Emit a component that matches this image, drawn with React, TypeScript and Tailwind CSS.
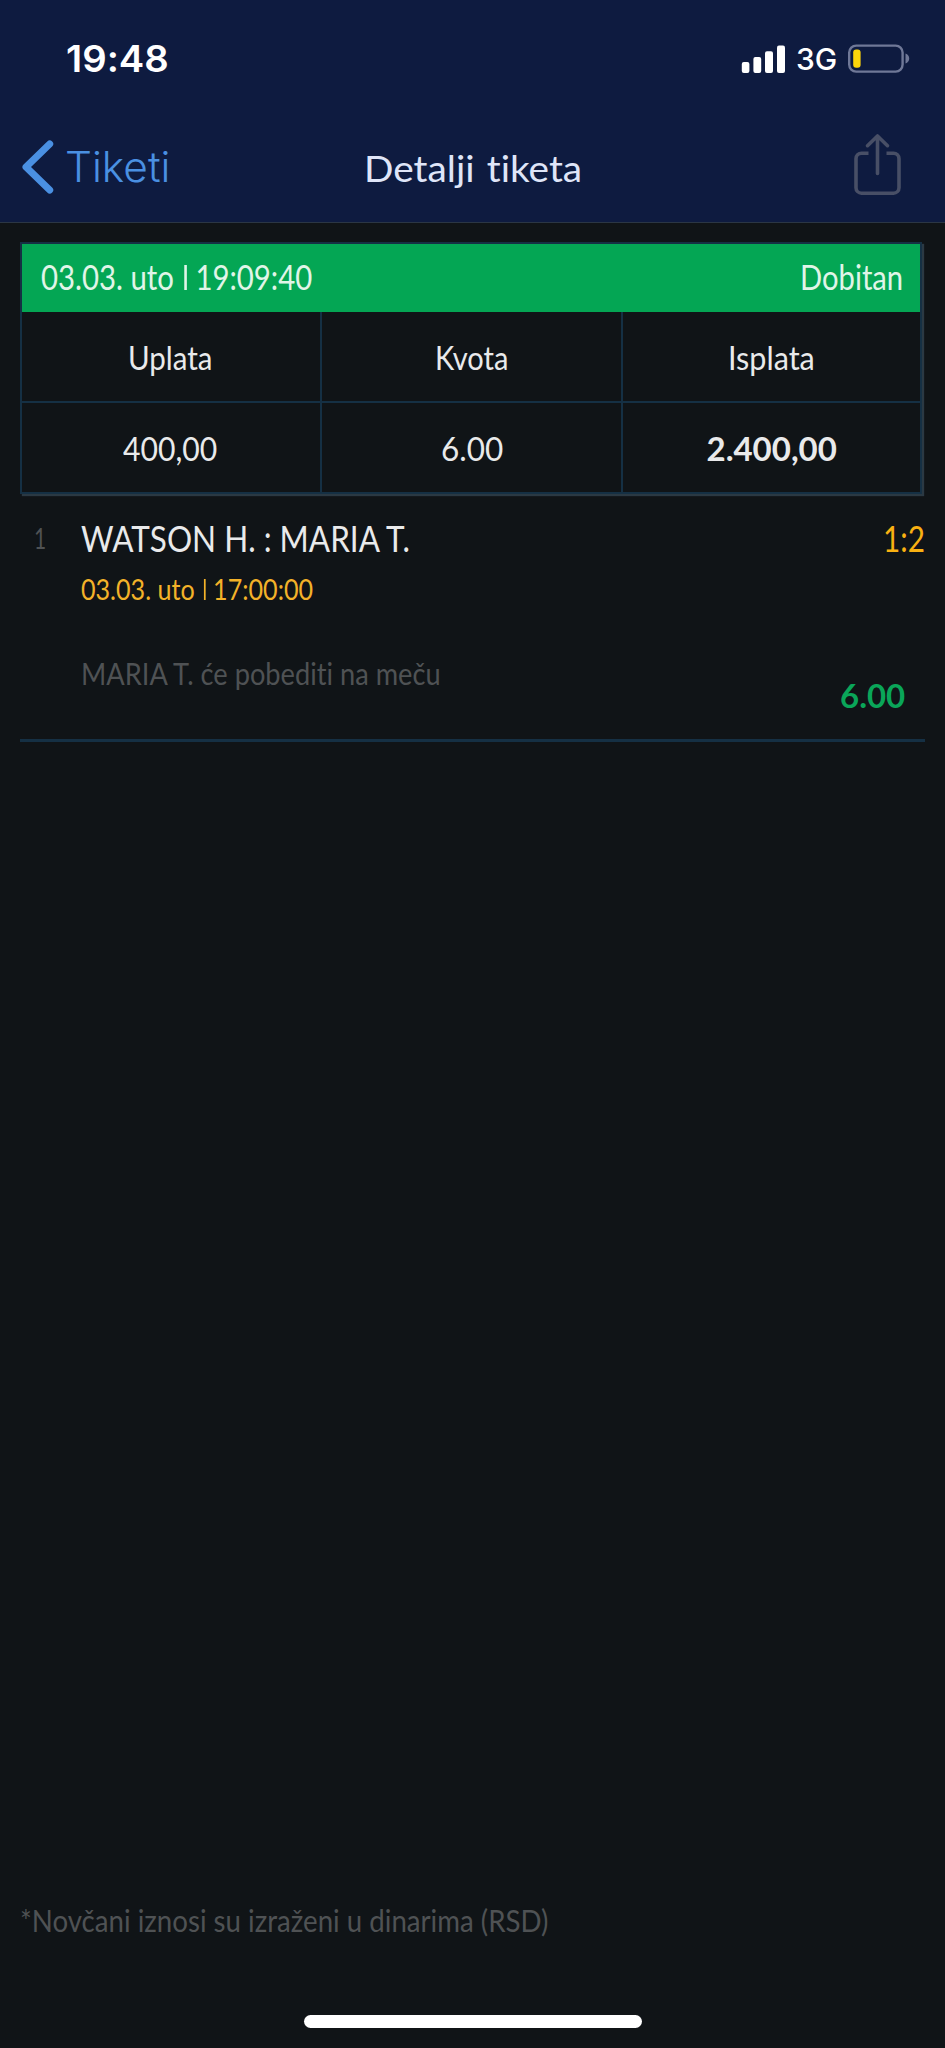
import { useLayoutEffect, useRef, useState } from "react";
import type { ReactNode } from "react";
import clsx from "clsx";

const SUMMARY = [
  { label: "Uplata", labelWidth: 84, value: "400,00", valueWidth: 94, strong: false },
  { label: "Kvota", labelWidth: 73, value: "6.00", valueWidth: 62, strong: false },
  { label: "Isplata", labelWidth: 87, value: "2.400,00", valueWidth: 130, strong: true },
];

export default function App() {
  return (
    <div className="flex h-[2048px] w-[945px] flex-col overflow-hidden bg-[#101417] font-['Lato',sans-serif] text-[#e9eaeb] [font-variant-ligatures:none]">
      <header className="h-[223px] shrink-0 border-b border-[#2b3644] bg-[#0e1b40]">
        <StatusBar />
        <NavBar />
      </header>

      <main className="flex flex-1 flex-col px-5 pt-[19px]">
        <TicketCard />
        <BetRow />
      </main>

      <footer className="h-[148px] shrink-0 pl-5">
        <Condensed width={528} className="h-10 text-[31px] leading-10 text-[#4f5254]">
          *Novčani iznosi su izraženi u dinarima (RSD)
        </Condensed>
        <div className="ml-[284px] mt-[75px] h-[13px] w-[338px] rounded-full bg-white" />
      </footer>
    </div>
  );
}

function StatusBar() {
  return (
    <div className="flex h-[117px] items-center justify-between pl-[66px] pr-[34px] font-['Inter',sans-serif] text-white">
      <Condensed width={103} className="h-12 text-[37.5px] font-semibold leading-[48px]">
        19:48
      </Condensed>
      <div className="flex items-center">
        <svg className="h-[28px] w-[44px]" viewBox="0 0 44 28" fill="currentColor">
          <rect x="0.8" y="17" width="7.6" height="11" rx="2" />
          <rect x="12.4" y="12" width="7.8" height="16" rx="2" />
          <rect x="24" y="6.2" width="8" height="21.8" rx="2" />
          <rect x="36" y="0.6" width="8" height="27.4" rx="2" />
        </svg>
        <Condensed width={41} className="ml-[11px] h-10 text-[30px] font-medium leading-10">
          3G
        </Condensed>
        <svg className="ml-[10px] h-[30px] w-[64px]" viewBox="0 0 64 30" fill="none">
          <rect x="2.2" y="1.6" width="53.4" height="26" rx="7" stroke="#6f7897" strokeWidth="2.4" />
          <rect x="6.2" y="5.6" width="7.4" height="18.2" rx="3" fill="#fdd60b" />
          <path d="M58.5 9.600c2.4.8 3.7 2.7 3.7 5s-1.3 4.200-3.700 5z" fill="#6f7897" />
        </svg>
      </div>
    </div>
  );
}

function NavBar() {
  return (
    <div className="grid h-[100px] grid-cols-[344px_1fr_52px] items-center pl-[20px] pr-[43px]">
      <div className="flex items-center text-[#4a90e2]">
        <svg className="h-[56px] w-[36px]" viewBox="0 0 36 56" fill="none">
          <path d="M29.7 5 6 28l23.7 23" stroke="currentColor" strokeWidth="7" strokeLinecap="round" strokeLinejoin="round" />
        </svg>
        <Condensed width={105} className="ml-[9px] h-12 font-['Inter',sans-serif] text-[42px] font-light leading-[48px]">
          Tiketi
        </Condensed>
      </div>
      <Condensed width={218} className="mt-[2px] h-12 text-[37px] leading-[48px] text-[#dfe5f8] [word-spacing:0.06em]">
        Detalji tiketa
      </Condensed>
      <svg className="mb-[4px] h-[64px] w-[52px]" viewBox="0 0 52 64" fill="none" stroke="#484f66" strokeWidth="3.6">
        <path d="M18.5 20.200h-7a5.500 5.500 0 0 0-5.500 5.500v29a5.500 5.500 0 0 0 5.500 5.500h32a5.500 5.500 0 0 0 5.500-5.500v-29a5.500 5.500 0 0 0-5.500-5.500h-7" />
        <path d="M27.500 40.500V3M17.500 12.700l10-9.700 10 9.700" strokeLinecap="round" strokeLinejoin="round" />
      </svg>
    </div>
  );
}

function TicketCard() {
  return (
    <section className="mb-[2px] mr-[3px] h-[252px] border-2 border-[#153044] shadow-[2px_2px_1px_#2b3943]">
      <div className="flex h-[68px] items-center justify-between bg-[#04a654] pb-[2px] pl-[19px] pr-[17px] text-[#e0f5e8]">
        <Condensed width={271} className="h-10 text-[34px] leading-10">
          03.03. uto
          <Pipe />
          19:09:40
        </Condensed>
        <Condensed width={103} className="h-10 text-[34px] leading-10">
          Dobitan
        </Condensed>
      </div>
      <div className="grid grid-cols-[300px_301px_1fr] divide-x-2 divide-[#153044]">
        {SUMMARY.map((cell, i) => (
          <div key={cell.label} className="divide-y-2 divide-[#153044]">
            <div className={clsx("flex h-[91px] items-center justify-center", i === 0 && "pr-[3px]")}>
              <Condensed width={cell.labelWidth} className="h-10 text-[33px] leading-10">
                {cell.label}
              </Condensed>
            </div>
            <div className={clsx("flex h-[89px] items-center justify-center", i === 0 && "pr-[3px]")}>
              <Condensed width={cell.valueWidth} className={clsx("h-10 text-[33px] leading-10", cell.strong && "font-bold")}>
                {cell.value}
              </Condensed>
            </div>
          </div>
        ))}
      </div>
    </section>
  );
}

function BetRow() {
  return (
    <section className="flex h-[246px] border-b-[3px] border-[#153044]">
      <div className="w-[61px] pl-[14px] pt-[22px]">
        <Condensed width={12} className="h-10 text-[28px] leading-10 text-[#4f5254]">
          1
        </Condensed>
      </div>
      <div className="flex-1">
        <Condensed width={329} className="mt-[18px] h-12 text-[37.5px] leading-[48px]">
          WATSON H. : MARIA T.
        </Condensed>
        <Condensed width={232} className="mt-[7px] h-10 text-[29px] leading-10 text-[#f3b229]">
          03.03. uto
          <Pipe />
          17:00:00
        </Condensed>
        <Condensed width={360} className="mt-[44px] h-10 text-[31px] leading-10 text-[#4f5254]">
          MARIA T. će pobediti na meču
        </Condensed>
      </div>
      <div className="flex flex-col items-end">
        <Condensed width={42} className="mt-[18px] h-12 text-[37.5px] leading-[48px] text-[#f9b112]">
          1:2
        </Condensed>
        <Condensed width={65} className="mr-[20px] mt-[113px] h-10 text-[33px] font-bold leading-10 text-[#0aa659]">
          6.00
        </Condensed>
      </div>
    </section>
  );
}

// Cap-height separator between date and time.
function Pipe() {
  return <span className="ml-[0.36em] mr-[0.3em] inline-block h-[0.73em] w-[0.075em] bg-current" />;
}

type CondensedProps = { width: number; className?: string; children: ReactNode };

// Squeezes a single line of text horizontally to the given width.
function Condensed({ width, className, children }: CondensedProps) {
  const ref = useRef<HTMLSpanElement>(null);
  const [scale, setScale] = useState(1);

  useLayoutEffect(() => {
    const natural = ref.current?.offsetWidth;
    if (natural) setScale(width / natural);
  }, [width, children]);

  return (
    <div className={className} style={{ width }}>
      <span ref={ref} className="inline-block origin-left whitespace-nowrap" style={{ transform: `scaleX(${scale})` }}>
        {children}
      </span>
    </div>
  );
}
